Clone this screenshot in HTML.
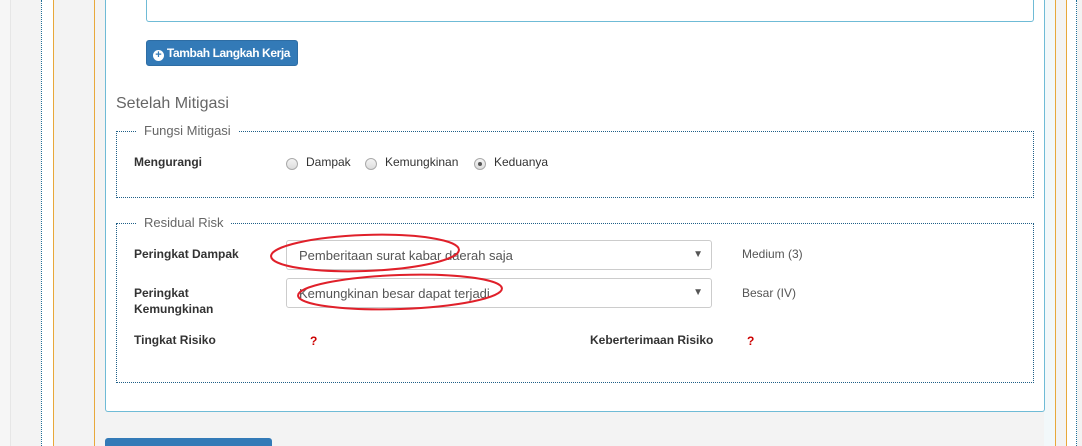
<!DOCTYPE html>
<html><head><style>
*{margin:0;padding:0;box-sizing:border-box}
html,body{width:1082px;height:446px;overflow:hidden}
body{background:#f3f3f3;position:relative;font-family:"Liberation Sans",sans-serif;color:#333}
.a{position:absolute}
.t{position:absolute;font-size:12px;white-space:nowrap}
.b{font-weight:bold;color:#333}
.fs{position:absolute;border:1px dotted #1f5f87}
.lg{position:absolute;background:#fff;padding:0 7px;font-size:13px;color:#666;top:-9px;left:20px}
.sel{position:absolute;left:286px;width:426px;height:30px;border:1px solid #ccc;border-radius:3px;background:#fff;font-size:13px;color:#555;padding:7px 12px}
.sel:after{content:"▼";position:absolute;right:8px;top:8px;font-size:10px;color:#555}
.rd{position:absolute;width:12px;height:12px;border-radius:50%;border:1px solid #aaa;background:linear-gradient(#f4f4f4,#ddd)}
.q{position:absolute;color:#c00;font-weight:bold;font-size:12px}
</style></head><body>
<div class="a" style="left:0;top:0;width:11px;height:446px;background:#f6f6f6;border-right:1px solid #e6e6e6"></div>
<div class="a" style="left:41px;top:0;width:12px;height:446px;background:#fff;border-left:1px dotted #1f6f97"></div>
<div class="a" style="left:53px;top:0;width:1px;height:446px;background:#e8a83a"></div>
<div class="a" style="left:94px;top:0;width:1px;height:446px;background:#e8a83a"></div>
<div class="a" style="left:1044px;top:0;width:11px;height:446px;background:#f2f8fa"></div>
<div class="a" style="left:1055px;top:0;width:1px;height:446px;background:#e8a83a"></div>
<div class="a" style="left:1066px;top:0;width:1px;height:446px;background:#e8a83a"></div>
<div class="a" style="left:1067px;top:0;width:10px;height:446px;background:#fff;border-right:1px dotted #1f6f97"></div>
<div class="a" style="left:105px;top:-5px;width:940px;height:417px;background:#fff;border:1px solid #6fbbd6;border-top:none;border-radius:0 0 3px 3px"></div>
<div class="a" style="left:146px;top:-5px;width:888px;height:27px;border:1px solid #6fbbd6;border-top:none;border-radius:0 0 3px 3px"></div>
<div class="a" style="left:146px;top:40px;width:152px;height:26px;background:#337ab7;border:1px solid #2e6da4;border-radius:3px;color:#fff;font-size:12px;font-weight:bold;padding:5px 0 0 6px;white-space:nowrap;letter-spacing:-0.4px;overflow:hidden"><span style="display:inline-block;width:11px;height:11px;border-radius:50%;background:#fff;color:#337ab7;font-size:11px;line-height:10px;text-align:center;vertical-align:-1px;letter-spacing:0">+</span> Tambah Langkah Kerja</div>
<div class="t" style="left:116px;top:95px;font-size:16px;color:#666">Setelah Mitigasi</div>
<div class="fs" style="left:116px;top:131px;width:918px;height:67px"><div class="lg">Fungsi Mitigasi</div></div>
<div class="t b" style="left:134px;top:155px">Mengurangi</div>
<div class="rd" style="left:286px;top:158px"></div><div class="t" style="left:306px;top:155px">Dampak</div>
<div class="rd" style="left:365px;top:158px"></div><div class="t" style="left:385px;top:155px">Kemungkinan</div>
<div class="rd" style="left:474px;top:158px"><div style="position:absolute;left:3px;top:3px;width:4px;height:4px;border-radius:50%;background:#555"></div></div><div class="t" style="left:494px;top:155px">Keduanya</div>
<div class="fs" style="left:116px;top:223px;width:918px;height:160px"><div class="lg">Residual Risk</div></div>
<div class="t b" style="left:134px;top:247px">Peringkat Dampak</div>
<div class="sel" style="top:240px">Pemberitaan surat kabar daerah saja</div>
<div class="t" style="left:742px;top:247px;color:#555">Medium (3)</div>
<div class="t b" style="left:134px;top:285px;line-height:16px">Peringkat<br>Kemungkinan</div>
<div class="sel" style="top:278px">Kemungkinan besar dapat terjadi</div>
<div class="t" style="left:742px;top:286px;color:#555">Besar (IV)</div>
<div class="t b" style="left:134px;top:333px">Tingkat Risiko</div>
<div class="q" style="left:310px;top:334px">?</div>
<div class="t b" style="left:590px;top:333px">Keberterimaan Risiko</div>
<div class="q" style="left:747px;top:334px">?</div>
<svg class="a" style="left:0;top:0" width="1082" height="446"><ellipse cx="365" cy="253" rx="94" ry="18" fill="none" stroke="#e0202a" stroke-width="2" transform="rotate(-2 365 253)"/><ellipse cx="400" cy="292" rx="102" ry="17" fill="none" stroke="#e0202a" stroke-width="2" transform="rotate(-2 400 292)"/></svg>
<div class="a" style="left:105px;top:438px;width:167px;height:12px;background:#337ab7;border-radius:3px"></div>
</body></html>
